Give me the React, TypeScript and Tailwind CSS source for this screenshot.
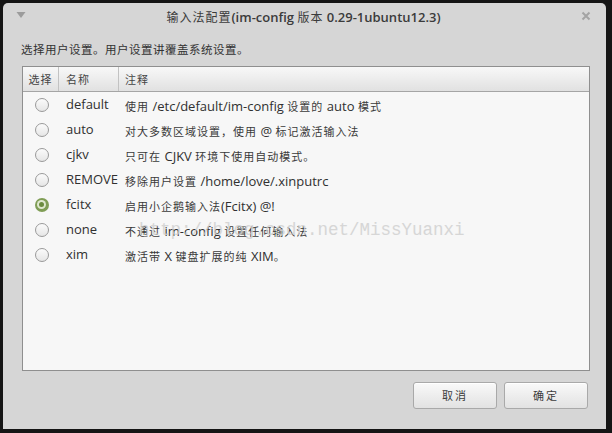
import React from "react";

const CJK = "font-['Noto_Sans_CJK_SC',sans-serif]";
const LATIN = "font-['Open_Sans','Noto_Sans_CJK_SC',sans-serif]";

const rows = [
  { name: "default", note: ["使用 ", "/etc/default/im-config", " 设置的 ", "auto", " 模式"] },
  { name: "auto", note: ["对大多数区域设置，使用 ", "@", " 标记激活输入法"] },
  { name: "cjkv", note: ["只可在 ", "CJKV", " 环境下使用自动模式。"] },
  { name: "REMOVE", note: ["移除用户设置 ", "/home/love/.xinputrc"] },
  { name: "fcitx", note: ["启用小企鹅输入法", "(Fcitx) @!"], checked: true },
  { name: "none", note: ["不通过 ", "im-config", " 设置任何输入法"] },
  { name: "xim", note: ["激活带 ", "X", " 键盘扩展的纯 ", "XIM", "。"] },
];

function Radio({ checked }: { checked?: boolean }) {
  if (checked) {
    return (
      <div className="w-[14px] h-[14px] rounded-full bg-[#7f9d55] flex items-center justify-center">
        <div className="w-[9px] h-[9px] rounded-full bg-[#dfe8cf] flex items-center justify-center">
          <div className="w-[5px] h-[5px] rounded-full bg-[#6b8b3e]" />
        </div>
      </div>
    );
  }
  return (
    <div className="w-[14px] h-[14px] rounded-full border border-[#9a9a9a] bg-gradient-to-b from-[#fbfbfb] to-[#e6e6e6]" />
  );
}

// latin runs in Open Sans, chinese runs a bit smaller and spaced out
function Note({ parts }: { parts: string[] }) {
  return (
    <span className="whitespace-pre">
      {parts.map((p, i) => {
        const latin = /^[\x20-\x7e]+$/.test(p.trim()) && p.trim().length > 0;
        return (
          <span
            key={i}
            className={
              latin
                ? `${LATIN} text-[13px] text-[#303030]`
                : `${CJK} text-[11px] text-[#3a3a3a] tracking-[1px]`
            }
          >
            {p}
          </span>
        );
      })}
    </span>
  );
}

function Button({ label }: { label: string }) {
  return (
    <button className="w-[84px] h-[27px] rounded-[3px] border border-[#a9a9a9] bg-gradient-to-b from-[#f9f9f9] to-[#e2e2e2] shadow-[inset_0_1px_0_#ffffff] flex items-center justify-center">
      <span className={`${CJK} text-[11px] text-[#3c3c3c] tracking-[2px]`}>{label}</span>
    </button>
  );
}

export default function App() {
  return (
    <div className="w-[612px] h-[433px] bg-[#151515] pl-[3px] pt-[3px] overflow-hidden">
      <div className="w-[603px] h-[426px] bg-[#d6d6d6] rounded-t-[5px] flex flex-col">
        {/* Title bar */}
        <div className="h-[25px] flex items-center px-[13px] shrink-0">
          <svg width="10" height="8" viewBox="0 0 10 8" className="mt-[-1px]">
            <path d="M0.5 1 L9.5 1 L5 7 Z" fill="#9c9c9c" />
          </svg>
          <div className="flex-1 text-center text-[#3b3b3b] whitespace-pre">
            <span className={`${CJK} text-[12px] tracking-[1px]`}>输入法配置</span>
            <span className={`${LATIN} text-[13px] font-semibold`}>(im-config </span>
            <span className={`${CJK} text-[12px] tracking-[1px]`}>版本</span>
            <span className={`${LATIN} text-[13px] font-semibold`}> 0.29-1ubuntu12.3)</span>
          </div>
          <svg width="10" height="10" viewBox="0 0 10 10" className="mr-[2px]">
            <path d="M1.5 1.5 L8.5 8.5 M8.5 1.5 L1.5 8.5" stroke="#a4a4a4" strokeWidth="2" />
          </svg>
        </div>

        {/* Instruction */}
        <div className={`${CJK} text-[11.5px] tracking-[0.5px] text-[#333] pl-[18px] pt-[5px] h-[38px] flex items-center shrink-0`}>
          选择用户设置。用户设置讲覆盖系统设置。
        </div>

        {/* Table */}
        <div className="ml-[19px] w-[568px] h-[305px] border border-[#8f8f8f] bg-[#f7f7f7] relative shrink-0">
          <div className="h-[25px] grid grid-cols-[36px_60px_1fr] border-b border-[#a5a5a5] bg-gradient-to-b from-[#f8f8f8] to-[#e1e1e1]">
            <div className={`${CJK} text-[11px] tracking-[1px] text-[#444] flex items-center justify-center border-r border-[#c2c2c2]`}>选择</div>
            <div className={`${CJK} text-[11px] tracking-[1px] text-[#444] flex items-center pl-[7px] border-r border-[#c2c2c2]`}>名称</div>
            <div className={`${CJK} text-[11px] tracking-[1px] text-[#444] flex items-center pl-[6px]`}>注释</div>
          </div>
          {rows.map((r) => (
            <div key={r.name} className="h-[25px] grid grid-cols-[36px_60px_1fr] items-center">
              <div className="flex justify-center pl-[1px]">
                <Radio checked={r.checked} />
              </div>
              <div className={`${LATIN} text-[13px] text-[#303030] pl-[7px] whitespace-nowrap`}>{r.name}</div>
              <div className="pl-[6px]">
                <Note parts={r.note} />
              </div>
            </div>
          ))}
          {/* watermark */}
          <div className="absolute left-[116px] top-[150px] font-['Liberation_Mono',monospace] text-[17.5px] text-[#cfcfcf] opacity-80 pointer-events-none whitespace-nowrap">
            http://blog.csdn.net/MissYuanxi
          </div>
        </div>

        {/* Buttons */}
        <div className="flex justify-end gap-[7px] pr-[18px] pt-[11px]">
          <Button label="取消" />
          <Button label="确定" />
        </div>
      </div>
    </div>
  );
}
